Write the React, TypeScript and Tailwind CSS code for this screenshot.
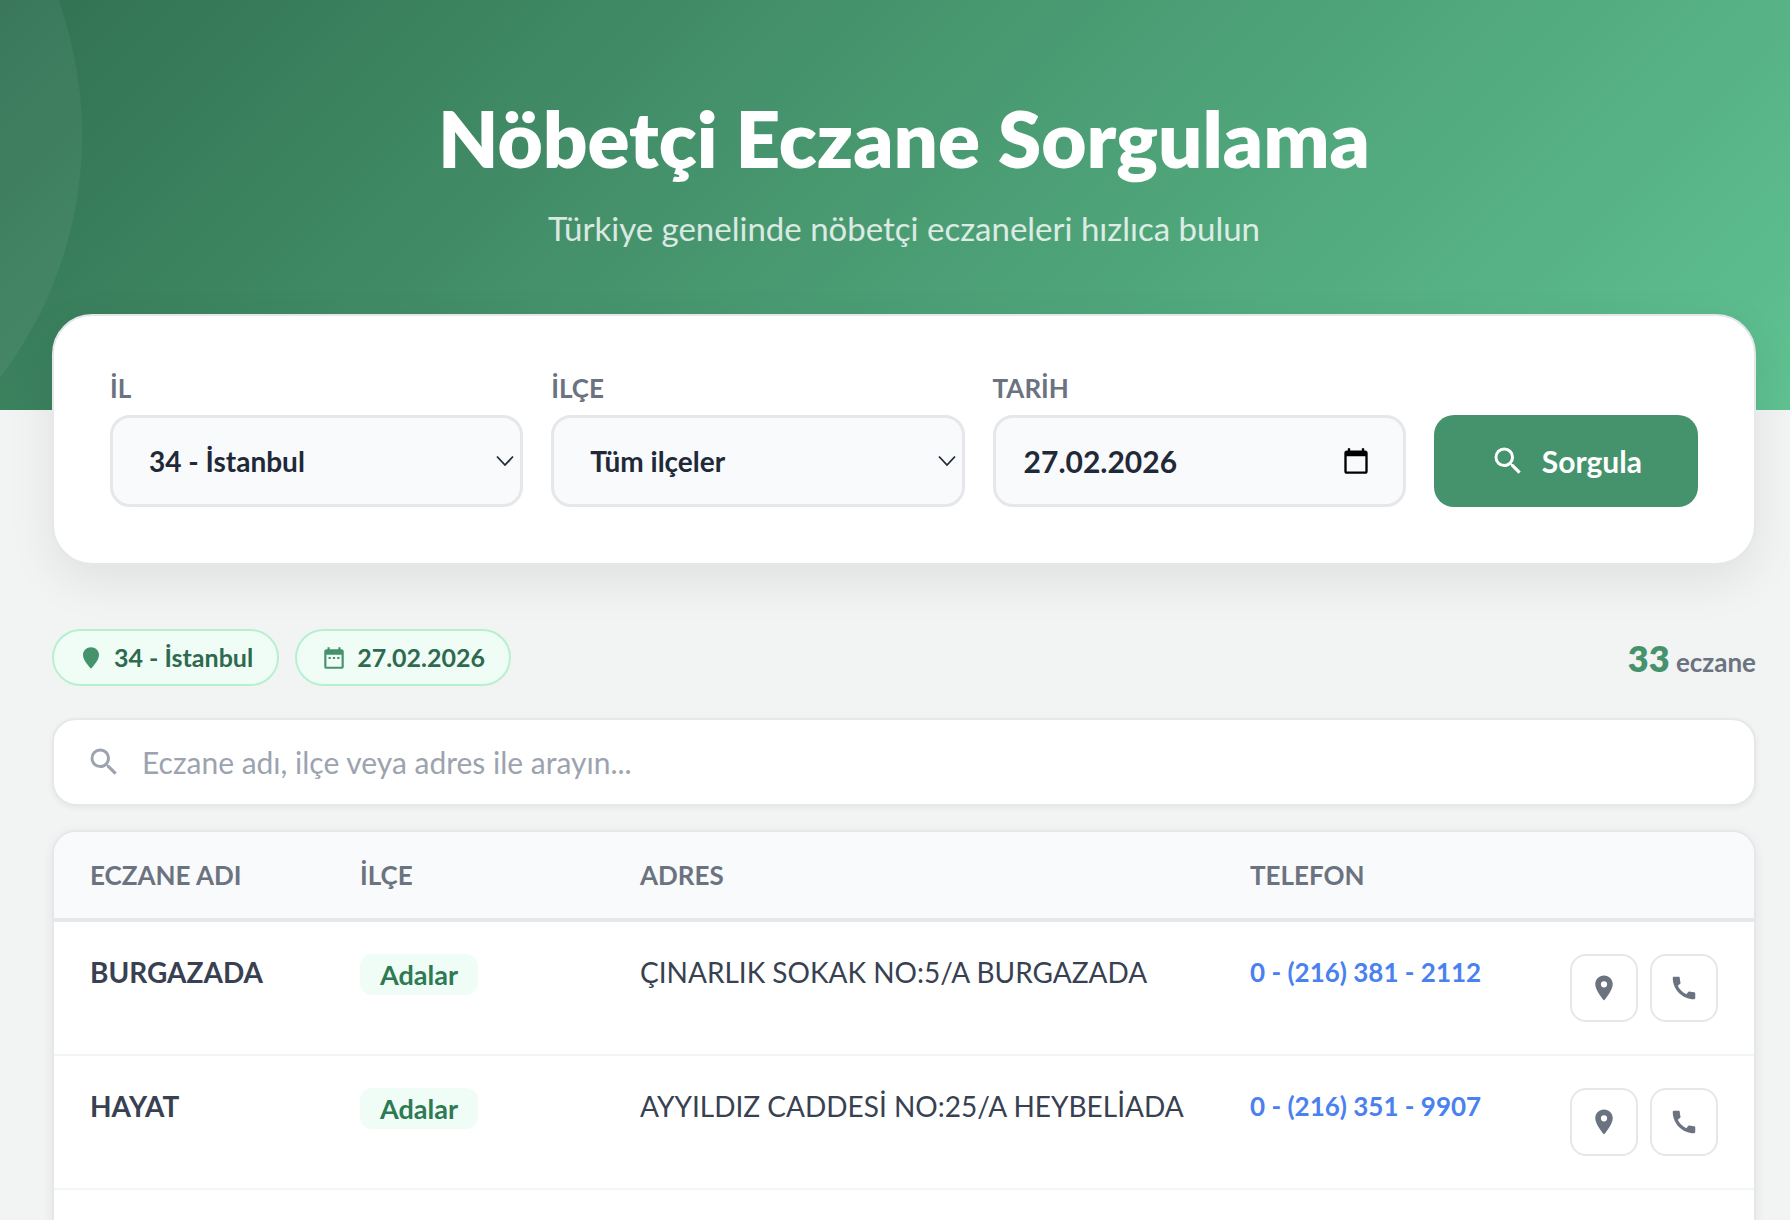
import { useState } from 'react';
import { MdCalendarToday, MdCall, MdDateRange, MdLocationOn, MdSearch } from 'react-icons/md';

interface Pharmacy {
  name: string;
  district: string;
  address: string;
  phone: string;
}

const pharmacies: Pharmacy[] = [
  { name: 'BURGAZADA', district: 'Adalar', address: 'ÇINARLIK SOKAK NO:5/A BURGAZADA', phone: '0 - (216) 381 - 2112' },
  { name: 'HAYAT', district: 'Adalar', address: 'AYYILDIZ CADDESİ NO:25/A HEYBELİADA', phone: '0 - (216) 351 - 9907' },
];

const fieldClass =
  'h-[92px] w-full appearance-none rounded-[20px] border-3 border-[#e5e7eb] bg-[#f9fafc] pr-14 font-bold text-[#1f2937] outline-none';
const labelClass = 'text-[26px] leading-[33px] font-bold text-[#6b7280]';
const chipClass = 'flex items-center gap-[10px] rounded-full border-2 border-[#b7f0d0] bg-[#f0fdf6] px-6 py-[10px]';
const actionClass = 'flex size-[68px] items-center justify-center rounded-2xl border-2 border-[#e5e7eb] bg-white text-[#6b7280]';

function Chevron() {
  return (
    <svg
      className="pointer-events-none absolute right-[9px] top-1/2 h-[11px] w-[18px] -translate-y-1/2"
      viewBox="0 0 18 11"
      fill="none"
      stroke="#1f2937"
      strokeWidth="1.8"
      aria-hidden="true"
    >
      <path d="M1 1l8 8.5L17 1" />
    </svg>
  );
}

function SolidPin() {
  return (
    <svg className="size-[26px]" viewBox="0 0 24 24" fill="#45936c" aria-hidden="true">
      <path d="M12 2C8 2 4.6 5.1 4.6 9.1c0 4.9 4.9 10 7.4 12.9 2.5-2.9 7.4-8 7.4-12.9C19.4 5.1 16 2 12 2z" />
    </svg>
  );
}

export default function App() {
  const [city, setCity] = useState('34');
  const [district, setDistrict] = useState('');
  const [date, setDate] = useState('27.02.2026');
  const [query, setQuery] = useState('');

  const needle = query.toLocaleLowerCase('tr');
  const rows = pharmacies.filter((p) =>
    `${p.name} ${p.district} ${p.address}`.toLocaleLowerCase('tr').includes(needle)
  );

  return (
    <div className="h-screen overflow-hidden bg-[#f2f4f3] font-['Lato',sans-serif]">
      <header className="relative h-[410px] overflow-hidden bg-[linear-gradient(135deg,#317152_0%,#45936c_40%,#5fc191_100%)] pt-[92px] pl-[18px] text-center">
        <div className="absolute -top-[265px] -left-[718px] size-[800px] rounded-full bg-white/5" />
        <h1 className="text-[78px] leading-[92px] font-extrabold text-white">Nöbetçi Eczane Sorgulama</h1>
        <p className="mt-6 text-[33px] leading-[40px] text-white/80">
          Türkiye genelinde nöbetçi eczaneleri hızlıca bulun
        </p>
      </header>

      <main className="relative -mt-24 pr-[34px] pl-[52px]">
        <form
          className="grid grid-cols-[1fr_1fr_1fr_auto] items-end gap-7 rounded-[40px] border-2 border-[#e5e7eb] bg-white p-14 shadow-[0_16px_48px_rgba(0,0,0,0.08)]"
          onSubmit={(e) => e.preventDefault()}
        >
          <div className="flex flex-col gap-[10px]">
            <label htmlFor="city" className={labelClass}>İL</label>
            <div className="relative">
              <select id="city" value={city} onChange={(e) => setCity(e.target.value)} className={`${fieldClass} pl-9 text-[28px]`}>
                <option value="34">34 - İstanbul</option>
              </select>
              <Chevron />
            </div>
          </div>
          <div className="flex flex-col gap-[10px]">
            <label htmlFor="district" className={labelClass}>İLÇE</label>
            <div className="relative">
              <select id="district" value={district} onChange={(e) => setDistrict(e.target.value)} className={`${fieldClass} pl-9 text-[28px]`}>
                <option value="">Tüm ilçeler</option>
                <option value="adalar">Adalar</option>
              </select>
              <Chevron />
            </div>
          </div>
          <div className="flex flex-col gap-[10px]">
            <label htmlFor="date" className={labelClass}>TARİH</label>
            <div className="relative">
              <input id="date" type="text" value={date} onChange={(e) => setDate(e.target.value)} className={`${fieldClass} pl-7 text-[30px]`} />
              <MdCalendarToday className="pointer-events-none absolute top-1/2 right-9 size-7 -translate-y-1/2 text-black" />
            </div>
          </div>
          <button
            type="submit"
            className="flex h-[92px] items-center gap-4 rounded-[20px] bg-[#45936c] px-14 text-[30px] font-bold text-white"
          >
            <MdSearch className="size-9" />
            Sorgula
          </button>
        </form>

        <div className="mt-16 flex items-center justify-between">
          <div className="flex gap-4 text-[25px] leading-[33px] font-bold text-[#2d6a4f]">
            <span className={chipClass}>
              <SolidPin />
              34 - İstanbul
            </span>
            <span className={chipClass}>
              <MdDateRange className="size-[26px] text-[#45936c]" />
              27.02.2026
            </span>
          </div>
          <p className="text-[26px] font-bold text-[#6b7280]">
            <strong className="text-[36px] font-extrabold text-[#45936c]">33</strong> eczane
          </p>
        </div>

        <div className="mt-8 flex h-[88px] items-center gap-5 rounded-3xl border-2 border-[#e5e7eb] bg-white px-8 shadow-[0_2px_6px_rgba(0,0,0,0.05)]">
          <MdSearch className="size-9 shrink-0 text-[#9ca3af]" />
          <input
            type="search"
            aria-label="Eczane ara"
            value={query}
            onChange={(e) => setQuery(e.target.value)}
            placeholder="Eczane adı, ilçe veya adres ile arayın..."
            className="w-full text-[30px] text-[#1f2937] outline-none placeholder:text-[#9ca3af]"
          />
        </div>

        <div className="mt-6 min-h-[480px] overflow-hidden rounded-3xl border-2 border-[#e5e7eb] bg-white shadow-[0_2px_12px_rgba(0,0,0,0.06)]">
          <table className="w-full table-fixed border-collapse text-left">
            <colgroup>
              <col className="w-[270px]" />
              <col className="w-[280px]" />
              <col />
              <col className="w-[320px]" />
              <col className="w-[220px]" />
            </colgroup>
            <thead className="border-b-4 border-[#e5e7eb] bg-[#f9fafc] text-[26px] leading-[30px] text-[#6b7280]">
              <tr>
                <th className="px-9 py-7 font-bold">ECZANE ADI</th>
                <th className="px-9 py-7 font-bold">İLÇE</th>
                <th className="px-9 py-7 font-bold">ADRES</th>
                <th className="px-9 py-7 font-bold">TELEFON</th>
                <th className="px-9 py-7" aria-label="İşlemler" />
              </tr>
            </thead>
            <tbody className="text-[28px] leading-[36px] text-[#374151]">
              {rows.map((p) => (
                <tr key={p.name} className="border-b-2 border-[#f3f4f6] align-top">
                  <td className="px-9 py-8 font-bold">{p.name}</td>
                  <td className="px-9 py-8">
                    <span className="inline-block rounded-xl bg-[#f0fdf6] px-5 py-1 text-[27px] leading-[33px] font-bold text-[#2d7a55]">
                      {p.district}
                    </span>
                  </td>
                  <td className="px-9 py-8 whitespace-nowrap">{p.address}</td>
                  <td className="px-9 py-8 text-[26px] font-bold whitespace-nowrap">
                    <a href={`tel:${p.phone.replace(/\D/g, '')}`} className="text-[#4a80f0]">
                      {p.phone}
                    </a>
                  </td>
                  <td className="px-9 py-8">
                    <div className="flex gap-3">
                      <a href={`#harita-${p.name}`} aria-label={`${p.name} haritada göster`} className={actionClass}>
                        <MdLocationOn className="size-[30px]" />
                      </a>
                      <a href={`tel:${p.phone.replace(/\D/g, '')}`} aria-label={`${p.name} ara`} className={actionClass}>
                        <MdCall className="size-[30px]" />
                      </a>
                    </div>
                  </td>
                </tr>
              ))}
            </tbody>
          </table>
        </div>
      </main>
    </div>
  );
}
